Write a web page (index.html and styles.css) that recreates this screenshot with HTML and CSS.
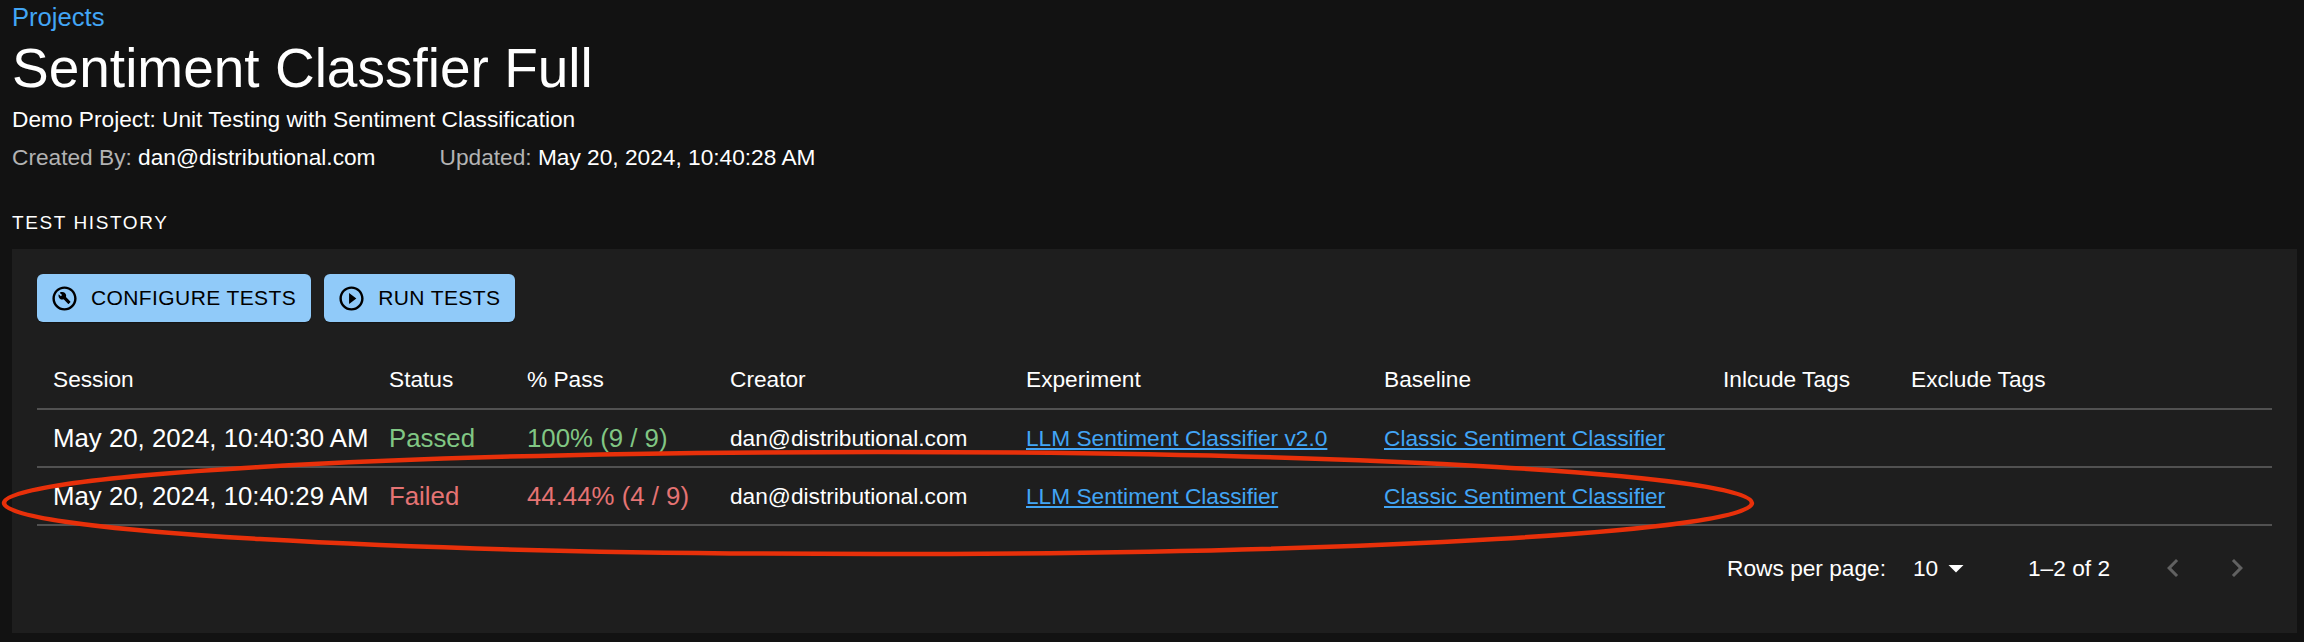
FILE: index.html
```html
<!DOCTYPE html>
<html>
<head>
  <link rel="stylesheet" href="styles.css">
</head>
<body>
  <a class="crumb" href="#">Projects</a>
  <h1>Sentiment Classfier Full</h1>
  <p class="desc">Demo Project: Unit Testing with Sentiment Classification</p>
  <div class="meta">
    <span class="meta-item"><span class="muted">Created By:</span> dan@distributional.com</span>
    <span class="meta-item"><span class="muted">Updated:</span> May 20, 2024, 10:40:28 AM</span>
  </div>
  <h2>TEST HISTORY</h2>

  <div class="panel">
    <div class="actions">
      <button class="btn">
        <svg class="btn-icon" viewBox="0 0 24 24"><path d="M12 2C6.48 2 2 6.48 2 12s4.48 10 10 10 10-4.48 10-10S17.52 2 12 2zm0 18c-4.41 0-8-3.59-8-8s3.59-8 8-8 8 3.59 8 8-3.59 8-8 8z"/><path d="M8.2 7.4 10 9.2 9 10.2 7.2 8.4C6.8 9.6 7.1 11 8 11.9c.9.9 2.2 1.2 3.3.8l3.6 3.6c.2.2.5.2.7 0l1.2-1.2c.2-.2.2-.5 0-.7l-3.6-3.6c.4-1.1.1-2.4-.8-3.3-.9-.9-2.4-1.2-3.9-.6z"/></svg>
        Configure Tests
      </button>
      <button class="btn">
        <svg class="btn-icon" viewBox="0 0 24 24"><path d="m10 16.5 6-4.5-6-4.5v9zM12 2C6.48 2 2 6.48 2 12s4.48 10 10 10 10-4.48 10-10S17.52 2 12 2zm0 18c-4.41 0-8-3.59-8-8s3.59-8 8-8 8 3.59 8 8-3.59 8-8 8z"/></svg>
        Run Tests
      </button>
    </div>

    <table>
      <colgroup>
        <col class="c-session"><col class="c-status"><col class="c-pass"><col class="c-creator">
        <col class="c-exp"><col class="c-base"><col class="c-inc"><col class="c-exc">
      </colgroup>
      <thead>
        <tr>
          <th>Session</th><th>Status</th><th>% Pass</th><th>Creator</th>
          <th>Experiment</th><th>Baseline</th><th>Inlcude Tags</th><th>Exclude Tags</th>
        </tr>
      </thead>
      <tbody>
        <tr>
          <td class="big">May 20, 2024, 10:40:30 AM</td>
          <td class="big pass">Passed</td>
          <td class="big pass">100% (9 / 9)</td>
          <td>dan@distributional.com</td>
          <td><a href="#">LLM Sentiment Classifier v2.0</a></td>
          <td><a href="#">Classic Sentiment Classifier</a></td>
          <td></td><td></td>
        </tr>
        <tr>
          <td class="big">May 20, 2024, 10:40:29 AM</td>
          <td class="big fail">Failed</td>
          <td class="big fail">44.44% (4 / 9)</td>
          <td>dan@distributional.com</td>
          <td><a href="#">LLM Sentiment Classifier</a></td>
          <td><a href="#">Classic Sentiment Classifier</a></td>
          <td></td><td></td>
        </tr>
      </tbody>
    </table>

    <div class="pager">
      <span class="pager-label">Rows per page:</span>
      <span class="pager-select">10 <svg class="caret" viewBox="0 0 24 24"><path d="m7 10 5 5 5-5z"/></svg></span>
      <span class="pager-count">1–2 of 2</span>
      <svg class="chev" viewBox="0 0 24 24"><path d="M15.41 7.41 14 6l-6 6 6 6 1.41-1.41L10.83 12z"/></svg>
      <svg class="chev" viewBox="0 0 24 24"><path d="M10 6 8.59 7.41 13.17 12l-4.58 4.59L10 18l6-6z"/></svg>
    </div>
  </div>

  <svg class="markup" viewBox="0 0 2304 642"><ellipse cx="878" cy="503" rx="874" ry="51"/></svg>
</body>
</html>
```

FILE: styles.css
```css
body {
  font-family: "Liberation Sans", Arial, sans-serif;
  margin: 0;
  padding: 0 7px 9px 12px;
  background: #121212;
  color: #fff;
  height: 642px;
  box-sizing: border-box;
  overflow: hidden;
}

a {
  color: #42a5f5;
}

.crumb {
  display: block;
  font-size: 25.6px;
  line-height: 34px;
  text-decoration: none;
}

h1 {
  font-size: 55px;
  font-weight: 400;
  line-height: 68px;
  margin: 0;
}

.desc {
  font-size: 22.7px;
  line-height: 32px;
  margin: 1px 0 0 0;
}

.meta {
  display: flex;
  gap: 64px;
  font-size: 22.7px;
  line-height: 32px;
  margin-top: 6px;
}

.muted {
  color: #b3b3b3;
}

h2 {
  font-size: 19px;
  font-weight: 400;
  letter-spacing: 1.6px;
  line-height: 30px;
  margin: 35px 0 0 0;
}

.panel {
  background: #1e1e1e;
  margin-top: 11px;
  height: 384px;
  padding: 25px 25px 0 25px;
  box-sizing: border-box;
}

.actions {
  display: flex;
  gap: 13px;
}

.btn {
  display: flex;
  align-items: center;
  height: 48px;
  padding: 0 15px 0 13px;
  gap: 12px;
  background: #90caf9;
  color: #000;
  border: none;
  border-radius: 6px;
  font-family: inherit;
  font-size: 21px;
  letter-spacing: 0.4px;
  text-transform: uppercase;
  box-shadow: 0 2px 1px -1px rgba(0,0,0,.2), 0 1px 1px rgba(0,0,0,.14);
}

.btn-icon {
  width: 29px;
  height: 29px;
}

table {
  width: 100%;
  table-layout: fixed;
  border-collapse: collapse;
  margin-top: 28px;
}

.c-session { width: 336px; }
.c-status { width: 138px; }
.c-pass { width: 203px; }
.c-creator { width: 296px; }
.c-exp { width: 358px; }
.c-base { width: 339px; }
.c-inc { width: 188px; }

th {
  font-size: 22.7px;
  font-weight: 400;
  text-align: left;
  height: 58px;
  padding: 0 16px;
  border-bottom: 2px solid #515151;
}

td {
  font-size: 22.7px;
  height: 56px;
  padding: 0 16px;
  white-space: nowrap;
  border-bottom: 2px solid #515151;
}

td.big {
  font-size: 25.8px;
}

.pass {
  color: #81c784;
}

.fail {
  color: #e57373;
}

.pager {
  display: flex;
  align-items: center;
  justify-content: flex-end;
  font-size: 22.7px;
  height: 84px;
  padding-right: 17px;
}

.pager-label {
  margin-right: 27px;
}

.pager-select {
  display: flex;
  align-items: center;
  width: 115px;
}

.caret {
  width: 36px;
  height: 36px;
  fill: #fff;
}

.pager-count {
  width: 99px;
}

.chev {
  width: 36px;
  height: 36px;
  fill: rgba(255,255,255,.3);
  margin-left: 28px;
}

/* hand-drawn red circle on top of the screenshot */
.markup {
  position: absolute;
  left: 0;
  top: 0;
  width: 2304px;
  height: 642px;
  pointer-events: none;
}

.markup ellipse {
  fill: none;
  stroke: #e8300a;
  stroke-width: 4.5;
}
```
